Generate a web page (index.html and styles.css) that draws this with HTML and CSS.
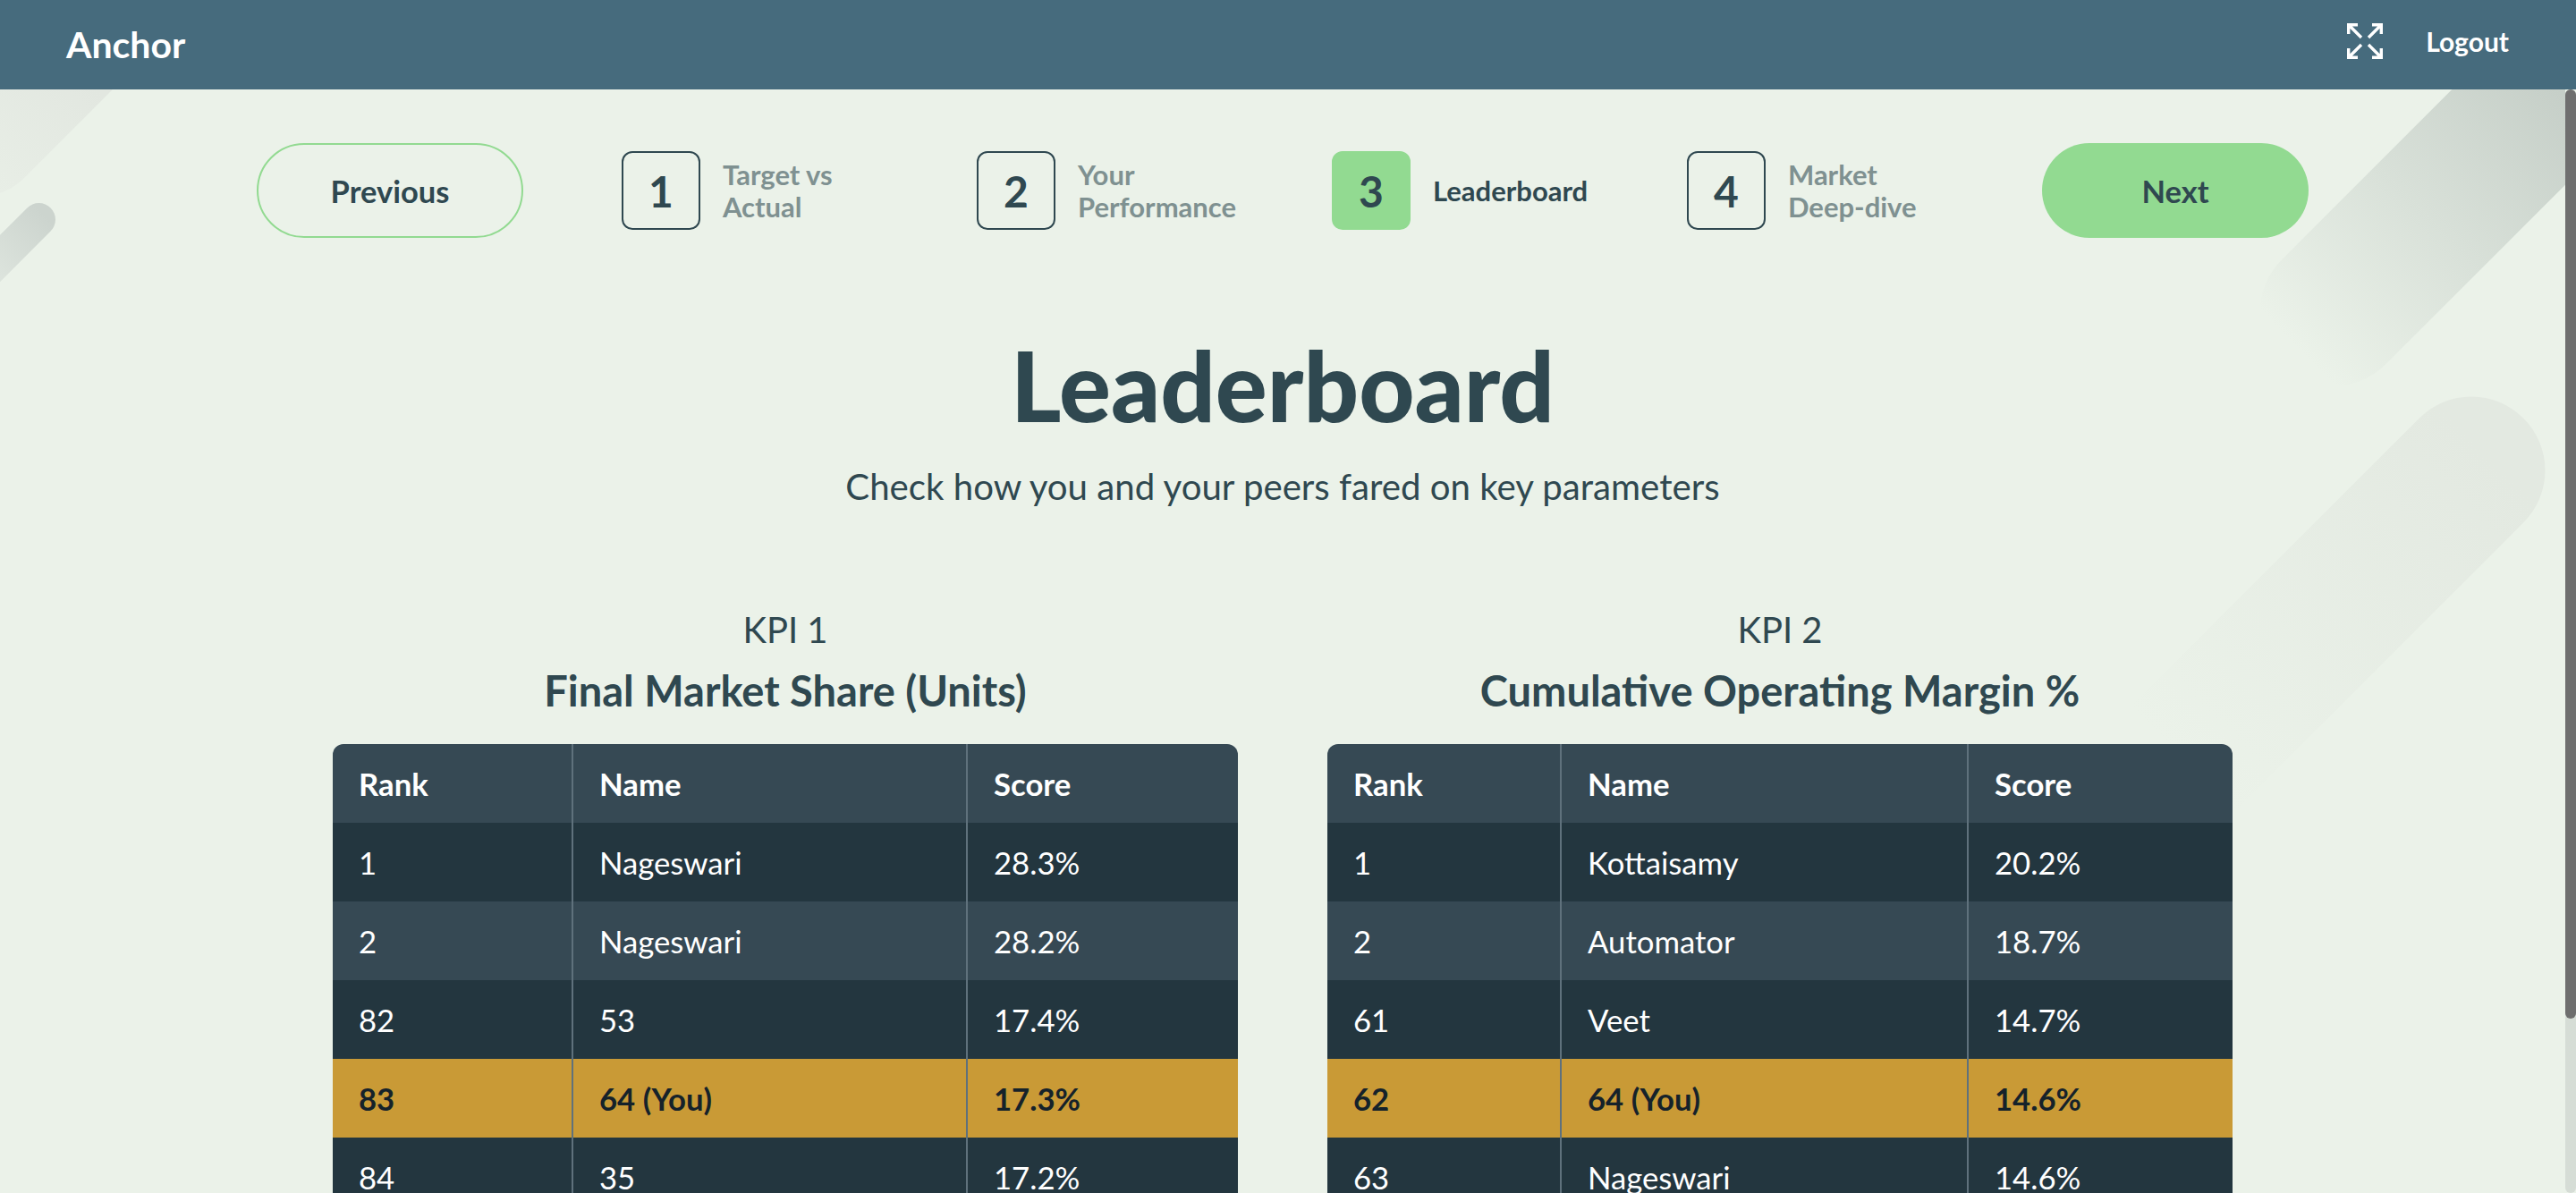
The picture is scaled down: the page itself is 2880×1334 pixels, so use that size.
FILE: index.html
```html
<!DOCTYPE html>
<html lang="en">
<head>
  <meta charset="UTF-8">
  <title>Anchor - Leaderboard</title>
  <link rel="stylesheet" href="styles.css">
</head>
<body>

  <header class="topbar">
    <div class="brand">Anchor</div>
    <div class="topbar-right">
      <svg class="expand-icon" viewBox="0 0 40 40" fill="none" stroke="#fff" stroke-width="3.4">
        <path d="M1.7 12V1.7H12M2.5 2.5L16 16"/>
        <path d="M38.3 12V1.7H28M37.5 2.5L24 16"/>
        <path d="M1.7 28V38.3H12M2.5 37.5L16 24"/>
        <path d="M38.3 28V38.3H28M37.5 37.5L24 24"/>
      </svg>
      <span class="logout">Logout</span>
    </div>
  </header>

  <main class="page">
    <svg class="page-bg" viewBox="0 100 2868 1234" width="2868" height="1234">
      <defs>
        <linearGradient id="bandTL" gradientUnits="userSpaceOnUse" x1="0" y1="220" x2="110" y2="100">
          <stop offset="0" stop-color="#e8eee6"/>
          <stop offset="1" stop-color="#e2e7e0"/>
        </linearGradient>
        <linearGradient id="pillTL" gradientUnits="userSpaceOnUse" x1="50" y1="240" x2="-20" y2="310">
          <stop offset="0" stop-color="#ccd4ce"/>
          <stop offset="1" stop-color="#dfe6df"/>
        </linearGradient>
        <linearGradient id="bandTR" gradientUnits="userSpaceOnUse" x1="2570" y1="390" x2="2860" y2="100">
          <stop offset="0" stop-color="#ebf2e9"/>
          <stop offset="1" stop-color="#c6cfc8"/>
        </linearGradient>
        <linearGradient id="pillR" gradientUnits="userSpaceOnUse" x1="2780" y1="510" x2="2440" y2="850">
          <stop offset="0" stop-color="#e3e9e1"/>
          <stop offset="1" stop-color="#ebf2e9"/>
        </linearGradient>
      </defs>
      <path d="M0 100H126L24 202Q12 212 0 216Z" fill="url(#bandTL)"/>
      <line x1="43.5" y1="245.5" x2="-40" y2="329" stroke="url(#pillTL)" stroke-width="37" stroke-linecap="round"/>
      <line x1="2609" y1="349" x2="3000" y2="-42" stroke="url(#bandTR)" stroke-width="165" stroke-linecap="round"/>
      <line x1="2763" y1="526" x2="2440" y2="849" stroke="url(#pillR)" stroke-width="165" stroke-linecap="round"/>
    </svg>

    <div class="content">
      <nav class="stepper">
        <button class="btn btn-outline">Previous</button>
        <div class="steps">
          <div class="step">
            <div class="step-num">1</div>
            <div class="step-label">Target vs<br>Actual</div>
          </div>
          <div class="step">
            <div class="step-num">2</div>
            <div class="step-label">Your<br>Performance</div>
          </div>
          <div class="step active">
            <div class="step-num">3</div>
            <div class="step-label">Leaderboard</div>
          </div>
          <div class="step">
            <div class="step-num">4</div>
            <div class="step-label">Market<br>Deep-dive</div>
          </div>
        </div>
        <button class="btn btn-solid">Next</button>
      </nav>

      <h1 class="title">Leaderboard</h1>
      <p class="subtitle">Check how you and your peers fared on key parameters</p>

      <div class="boards">
        <section class="board board-one">
          <div class="kpi">KPI 1</div>
          <h2 class="kpi-name">Final Market Share (Units)</h2>
          <div class="table-wrap">
            <table>
              <thead>
                <tr><th class="col-rank">Rank</th><th class="col-name">Name</th><th>Score</th></tr>
              </thead>
              <tbody>
                <tr><td>1</td><td>Nageswari</td><td>28.3%</td></tr>
                <tr><td>2</td><td>Nageswari</td><td>28.2%</td></tr>
                <tr><td>82</td><td>53</td><td>17.4%</td></tr>
                <tr class="you"><td>83</td><td>64 (You)</td><td>17.3%</td></tr>
                <tr><td>84</td><td>35</td><td>17.2%</td></tr>
              </tbody>
            </table>
          </div>
        </section>

        <section class="board board-two">
          <div class="kpi">KPI 2</div>
          <h2 class="kpi-name">Cumulative Operating Margin %</h2>
          <div class="table-wrap">
            <table>
              <thead>
                <tr><th class="col-rank">Rank</th><th class="col-name">Name</th><th>Score</th></tr>
              </thead>
              <tbody>
                <tr><td>1</td><td>Kottaisamy</td><td>20.2%</td></tr>
                <tr><td>2</td><td>Automator</td><td>18.7%</td></tr>
                <tr><td>61</td><td>Veet</td><td>14.7%</td></tr>
                <tr class="you"><td>62</td><td>64 (You)</td><td>14.6%</td></tr>
                <tr><td>63</td><td>Nageswari</td><td>14.6%</td></tr>
              </tbody>
            </table>
          </div>
        </section>
      </div>
    </div>

    <div class="scrollbar">
      <div class="scrollbar-thumb"></div>
    </div>
  </main>

</body>
</html>
```

FILE: styles.css
```css
* {
  box-sizing: border-box;
}

body {
  margin: 0;
  height: 100vh;
  overflow: hidden;
  background: #ebf2e9;
  color: #2f4850;
  font-family: Lato, "Open Sans", sans-serif;
}

/* top bar */
.topbar {
  height: 100px;
  padding: 0 75px 0 74px;
  display: flex;
  align-items: center;
  justify-content: space-between;
  background: #466b7d;
  color: #fff;
}

.brand {
  font-size: 41px;
  font-weight: 700;
  margin-top: -2px;
}

.topbar-right {
  display: flex;
  align-items: center;
  gap: 48px;
  margin-top: -8px;
}

.expand-icon {
  width: 40px;
  height: 40px;
}

.logout {
  font-size: 30px;
  font-weight: 700;
}

/* page below the bar, with its scrollbar drawn as a column */
.page {
  position: relative;
  height: calc(100vh - 100px);
  display: flex;
  overflow: hidden;
}

.scrollbar {
  position: relative;
  flex: 0 0 12px;
  border-radius: 6px;
  background: #d6ddd6;
}

.scrollbar-thumb {
  height: 1039px;
  border-radius: 6px;
  background: #6f6f6f;
}

.page-bg {
  position: absolute;
  top: 0;
  left: 0;
}

.content {
  position: relative;
  flex: 1;
  padding: 60px 287px 0;
}

/* stepper */
.stepper {
  display: flex;
  align-items: center;
}

.btn {
  flex: 0 0 298px;
  height: 106px;
  border-radius: 53px;
  font-family: inherit;
  font-size: 34.5px;
  font-weight: 700;
  color: #2f4850;
}

.btn-outline {
  background: transparent;
  border: 2px solid #92da91;
}

.btn-solid {
  background: #92da91;
  border: 0;
}

.steps {
  display: flex;
  margin-left: 110px;
}

.step {
  flex: 0 0 397px;
  display: flex;
  align-items: center;
  gap: 25px;
}

.step-num {
  width: 88px;
  height: 88px;
  display: flex;
  align-items: center;
  justify-content: center;
  border: 2px solid #2f4850;
  border-radius: 12px;
  font-size: 48px;
  font-weight: 700;
}

.step-label {
  font-size: 31px;
  line-height: 36px;
  font-weight: 700;
  color: #7f9191;
}

.step.active .step-num {
  background: #92da91;
  border-color: #92da91;
}

.step.active .step-label {
  color: #2f4850;
}

/* headings */
.title {
  margin: 102px 0 0;
  text-align: center;
  font-size: 108px;
  line-height: 124px;
  font-weight: 900;
}

.subtitle {
  margin: 28px 0 0;
  text-align: center;
  font-size: 40.2px;
  line-height: 48px;
}

/* leaderboards */
.boards {
  display: flex;
  justify-content: center;
  gap: 100px;
  margin-top: 112px;
}

.board {
  width: 1012px;
}

.kpi {
  text-align: center;
  font-size: 40px;
  line-height: 48px;
}

.kpi-name {
  margin: 18px 0 0;
  text-align: center;
  font-size: 47px;
  line-height: 52px;
  font-weight: 700;
}

.table-wrap {
  margin-top: 34px;
  border-radius: 12px 12px 0 0;
  overflow: hidden;
}

table {
  width: 100%;
  table-layout: fixed;
  border-collapse: collapse;
  color: #fff;
  font-size: 34.7px;
}

th,
td {
  height: 88px;
  padding: 0 29px;
  text-align: left;
  border-right: 2px solid #5f717c;
}

th:last-child,
td:last-child {
  border-right: 0;
}

th {
  background: #364954;
  font-weight: 700;
}

td {
  background: #23363f;
}

tbody tr:nth-child(2) td {
  background: #364954;
}

tr.you td {
  background: #c99a36;
  color: #15222a;
  font-weight: 700;
}

.board-one .col-rank {
  width: 268px;
}

.board-one .col-name {
  width: 441px;
}

.board-two .col-rank {
  width: 261px;
}

.board-two .col-name {
  width: 455px;
}
```
